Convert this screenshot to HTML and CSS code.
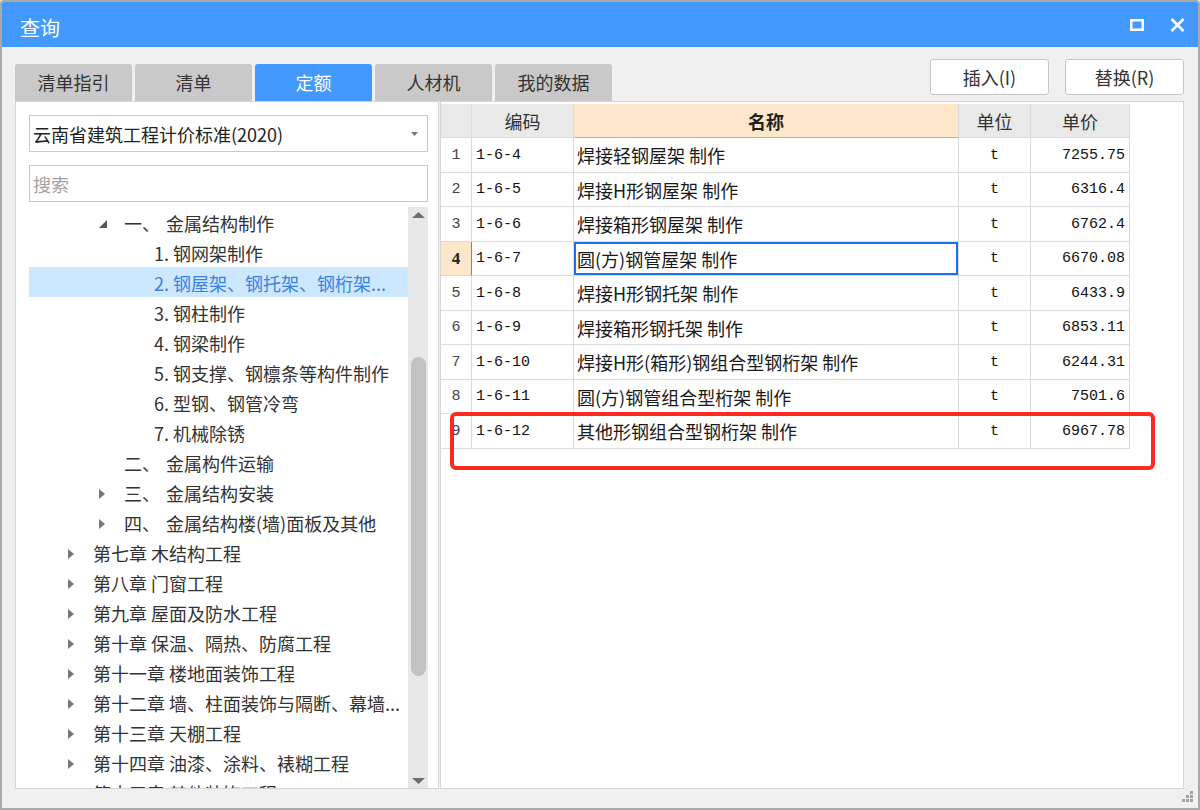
FILE: index.html
```html
<!DOCTYPE html>
<html lang="zh-CN">
<head>
<meta charset="utf-8">
<title>查询</title>
<link rel="stylesheet" href="styles.css">
</head>
<body>
<div class="window">
  <div class="titlebar">
    <span class="title">查询</span>
    <div class="win-ctrls">
      <svg class="ico" width="14" height="12" viewBox="0 0 14 12"><rect x="1.25" y="1.25" width="11.5" height="9.5" fill="none" stroke="#fff" stroke-width="2.5"/></svg>
      <svg class="ico" width="15" height="14" viewBox="0 0 15 14"><path d="M1.5 1 L13.5 13 M13.5 1 L1.5 13" stroke="#fff" stroke-width="2.6" fill="none"/></svg>
    </div>
  </div>
  <div class="body">
    <div class="toolbar">
      <div class="tabs">
        <div class="tab">清单指引</div>
        <div class="tab">清单</div>
        <div class="tab active">定额</div>
        <div class="tab">人材机</div>
        <div class="tab">我的数据</div>
      </div>
      <div class="actions">
        <button class="btn">插入(I)</button>
        <button class="btn">替换(R)</button>
      </div>
    </div>
    <div class="panes">
      <div class="left-pane">
        <div class="combo">
          <span>云南省建筑工程计价标准(2020)</span>
          <svg width="7" height="4" viewBox="0 0 7 4"><path d="M0 0 H7 L3.5 4 Z" fill="#777"/></svg>
        </div>
        <div class="search">搜索</div>
        <div class="tree-wrap">
          <div class="tree">
            <div class="node l2"><span class="exp"><svg width="8" height="8" viewBox="0 0 8 8"><path d="M8 0 V8 H0 Z" fill="#555"/></svg></span><span class="gap">一、</span>金属结构制作</div>
            <div class="node l3"><span class="exp"></span>1. 钢网架制作</div>
            <div class="node l3 sel"><span class="exp"></span>2. 钢屋架、钢托架、钢桁架...</div>
            <div class="node l3"><span class="exp"></span>3. 钢柱制作</div>
            <div class="node l3"><span class="exp"></span>4. 钢梁制作</div>
            <div class="node l3"><span class="exp"></span>5. 钢支撑、钢檩条等构件制作</div>
            <div class="node l3"><span class="exp"></span>6. 型钢、钢管冷弯</div>
            <div class="node l3"><span class="exp"></span>7. 机械除锈</div>
            <div class="node l2"><span class="exp"></span><span class="gap">二、</span>金属构件运输</div>
            <div class="node l2"><span class="exp"><svg width="6" height="10" viewBox="0 0 6 10"><path d="M0 0 L6 5 L0 10 Z" fill="#777"/></svg></span><span class="gap">三、</span>金属结构安装</div>
            <div class="node l2"><span class="exp"><svg width="6" height="10" viewBox="0 0 6 10"><path d="M0 0 L6 5 L0 10 Z" fill="#777"/></svg></span><span class="gap">四、</span>金属结构楼(墙)面板及其他</div>
            <div class="node l1"><span class="exp"><svg width="6" height="10" viewBox="0 0 6 10"><path d="M0 0 L6 5 L0 10 Z" fill="#777"/></svg></span>第七章 木结构工程</div>
            <div class="node l1"><span class="exp"><svg width="6" height="10" viewBox="0 0 6 10"><path d="M0 0 L6 5 L0 10 Z" fill="#777"/></svg></span>第八章 门窗工程</div>
            <div class="node l1"><span class="exp"><svg width="6" height="10" viewBox="0 0 6 10"><path d="M0 0 L6 5 L0 10 Z" fill="#777"/></svg></span>第九章 屋面及防水工程</div>
            <div class="node l1"><span class="exp"><svg width="6" height="10" viewBox="0 0 6 10"><path d="M0 0 L6 5 L0 10 Z" fill="#777"/></svg></span>第十章 保温、隔热、防腐工程</div>
            <div class="node l1"><span class="exp"><svg width="6" height="10" viewBox="0 0 6 10"><path d="M0 0 L6 5 L0 10 Z" fill="#777"/></svg></span>第十一章 楼地面装饰工程</div>
            <div class="node l1"><span class="exp"><svg width="6" height="10" viewBox="0 0 6 10"><path d="M0 0 L6 5 L0 10 Z" fill="#777"/></svg></span>第十二章 墙、柱面装饰与隔断、幕墙...</div>
            <div class="node l1"><span class="exp"><svg width="6" height="10" viewBox="0 0 6 10"><path d="M0 0 L6 5 L0 10 Z" fill="#777"/></svg></span>第十三章 天棚工程</div>
            <div class="node l1"><span class="exp"><svg width="6" height="10" viewBox="0 0 6 10"><path d="M0 0 L6 5 L0 10 Z" fill="#777"/></svg></span>第十四章 油漆、涂料、裱糊工程</div>
            <div class="node l1"><span class="exp"><svg width="6" height="10" viewBox="0 0 6 10"><path d="M0 0 L6 5 L0 10 Z" fill="#777"/></svg></span>第十五章 其他装饰工程</div>
          </div>
          <div class="vscroll">
            <svg class="arr-up" width="13" height="6" viewBox="0 0 13 6"><path d="M0 6 L6.5 0 L13 6 Z" fill="#6e6e6e"/></svg>
            <div class="thumb"></div>
            <div class="spacer"></div>
            <svg class="arr-down" width="13" height="6" viewBox="0 0 13 6"><path d="M0 0 L13 0 L6.5 6 Z" fill="#6e6e6e"/></svg>
          </div>
        </div>
      </div>
      <div class="right-pane">
        <div class="grid">
          <div class="c h"></div><div class="c h">编码</div><div class="c h hname">名称</div><div class="c h">单位</div><div class="c h">单价</div>

          <div class="c rn">1</div><div class="c code">1-6-4</div><div class="c name">焊接轻钢屋架 制作</div><div class="c unit">t</div><div class="c price">7255.75</div>
          <div class="c rn">2</div><div class="c code">1-6-5</div><div class="c name">焊接H形钢屋架 制作</div><div class="c unit">t</div><div class="c price">6316.4</div>
          <div class="c rn">3</div><div class="c code">1-6-6</div><div class="c name">焊接箱形钢屋架 制作</div><div class="c unit">t</div><div class="c price">6762.4</div>
          <div class="c rn cur">4</div><div class="c code">1-6-7</div><div class="c name focus">圆(方)钢管屋架 制作</div><div class="c unit">t</div><div class="c price">6670.08</div>
          <div class="c rn">5</div><div class="c code">1-6-8</div><div class="c name">焊接H形钢托架 制作</div><div class="c unit">t</div><div class="c price">6433.9</div>
          <div class="c rn">6</div><div class="c code">1-6-9</div><div class="c name">焊接箱形钢托架 制作</div><div class="c unit">t</div><div class="c price">6853.11</div>
          <div class="c rn">7</div><div class="c code">1-6-10</div><div class="c name">焊接H形(箱形)钢组合型钢桁架 制作</div><div class="c unit">t</div><div class="c price">6244.31</div>
          <div class="c rn">8</div><div class="c code">1-6-11</div><div class="c name">圆(方)钢管组合型桁架 制作</div><div class="c unit">t</div><div class="c price">7501.6</div>
          <div class="c rn">9</div><div class="c code">1-6-12</div><div class="c name">其他形钢组合型钢桁架 制作</div><div class="c unit">t</div><div class="c price">6967.78</div>
        </div>
        <div class="mark"></div>
      </div>
    </div>
    <svg class="grip" width="12" height="12" viewBox="0 0 12 12">
      <rect x="8" y="0" width="3" height="3" fill="#a3a3a3"/>
      <rect x="4" y="4" width="3" height="3" fill="#a3a3a3"/>
      <rect x="8" y="4" width="3" height="3" fill="#a3a3a3"/>
      <rect x="0" y="8" width="3" height="3" fill="#a3a3a3"/>
      <rect x="4" y="8" width="3" height="3" fill="#a3a3a3"/>
      <rect x="8" y="8" width="3" height="3" fill="#a3a3a3"/>
    </svg>
  </div>
</div>
</body>
</html>
```

FILE: styles.css
```css
* { box-sizing: border-box; }
html, body { margin: 0; padding: 0; }
body {
  width: 1200px;
  height: 810px;
  overflow: hidden;
  font-family: "Noto Sans CJK SC", "Noto Sans", sans-serif;
  color: #333;
  background: #f0f0f0;
}
.window {
  width: 1200px;
  height: 810px;
  border: 2px solid #a9a9a9;
  border-radius: 4px 4px 0 0;
  display: flex;
  flex-direction: column;
  background: #f0f0f0;
  overflow: hidden;
}
.titlebar {
  height: 45px;
  flex: none;
  background: #4499ff;
  display: flex;
  align-items: center;
  padding: 0 13px 0 18px;
  color: #fff;
}
.title {
  flex: 1;
  font-size: 20px;
  line-height: 24px;
  padding-top: 6px;
}
.win-ctrls {
  display: flex;
  align-items: center;
  gap: 26px;
}
.ico { display: block; }

.body {
  flex: 1;
  position: relative;
  padding: 12px 14px 19px 13px;
  display: flex;
  flex-direction: column;
}
.toolbar {
  height: 42px;
  flex: none;
  display: flex;
  justify-content: space-between;
}
.tabs {
  display: flex;
  gap: 3px;
  align-self: flex-end;
}
.tab {
  width: 117px;
  height: 37px;
  background: #c9c9c9;
  border-radius: 3px 3px 0 0;
  font-size: 18px;
  line-height: 37px;
  text-align: center;
  color: #333;
}
.tab.active {
  background: #4499ff;
  color: #fff;
}
.actions {
  display: flex;
  gap: 16px;
  align-self: flex-start;
}
.btn {
  width: 119px;
  height: 36px;
  padding: 0;
  border: 1px solid #c6c6c6;
  border-radius: 3px;
  background: #fff;
  font-family: "Noto Sans CJK SC", "Noto Sans", sans-serif;
  font-size: 18px;
  line-height: 34px;
  color: #333;
}

.panes {
  height: 688px;
  flex: none;
  display: flex;
  gap: 1px;
}
.left-pane {
  width: 424px;
  flex: none;
  background: #fff;
  border: 1px solid #d6d6d6;
  padding: 13px 10px 0 13px;
  display: flex;
  flex-direction: column;
}
.combo {
  height: 37px;
  flex: none;
  border: 1px solid #c9c9c9;
  display: flex;
  align-items: center;
  justify-content: space-between;
  padding: 1px 9px 0 3px;
  font-size: 18px;
  color: #222;
}
.search {
  height: 37px;
  flex: none;
  margin-top: 13px;
  border: 1px solid #c9c9c9;
  padding-left: 3px;
  font-size: 18px;
  line-height: 36px;
  color: #a2a2a2;
}
.tree-wrap {
  flex: 1;
  min-height: 0;
  margin-top: 5px;
  display: flex;
  overflow: hidden;
}
.tree {
  flex: 1;
  min-width: 0;
}
.node {
  height: 30px;
  display: flex;
  align-items: center;
  padding-top: 3px;
  font-size: 18px;
  line-height: 27px;
  white-space: nowrap;
  overflow: hidden;
  color: #333;
}
.node.l1 { padding-left: 39px; }
.node.l2 { padding-left: 70px; }
.node.l3 { padding-left: 100px; }
.node.sel {
  background: #cce8ff;
  color: #3d80e4;
}
.exp {
  width: 25px;
  flex: none;
  display: flex;
  align-items: center;
}
.exp svg { display: block; }
.gap { margin-right: 6px; }

.vscroll {
  width: 20px;
  flex: none;
  background: #e8e8e8;
  display: flex;
  flex-direction: column;
  align-items: center;
}
.arr-up { margin-top: 5px; flex: none; }
.thumb {
  flex: none;
  margin-top: 139px;
  width: 15px;
  height: 319px;
  border-radius: 8px;
  background: #c2c2c2;
}
.spacer { flex: 1; }
.arr-down { margin-bottom: 4px; flex: none; }

.right-pane {
  flex: 1;
  position: relative;
  background: #fff;
  border: 1px solid #d6d6d6;
  padding-top: 2px;
}
.grid {
  display: grid;
  grid-template-columns: 31px 102px 385px 72px 99px;
  grid-template-rows: 34px repeat(4, 35px 34px) 35px;
  width: max-content;
}
.c {
  border-right: 1px solid #dbdbdb;
  border-bottom: 1px solid #dbdbdb;
  display: flex;
  align-items: center;
  white-space: nowrap;
  overflow: hidden;
  color: #1a1a1a;
}
.h {
  background: #e9e9e9;
  justify-content: center;
  font-size: 18px;
  color: #333;
}
.h.hname {
  background: #fde6c9;
  font-weight: bold;
  color: #222;
  border-bottom-color: #8fbdf3;
}
.rn {
  justify-content: center;
  font-family: "Liberation Mono", monospace;
  font-size: 15px;
  color: #444;
}
.rn.cur {
  background: #fde6c9;
  font-family: "Liberation Serif", serif;
  font-size: 17px;
  font-weight: bold;
  color: #222;
  border-right: 1px solid #4a92ea;
}
.code {
  padding-left: 4px;
  font-family: "Liberation Mono", monospace;
  font-size: 15px;
  color: #111;
}
.name {
  padding-left: 3px;
  font-size: 18px;
}
.name.focus {
  box-shadow: inset 0 0 0 2px #1a6ff2;
}
.unit {
  justify-content: center;
  font-family: "Liberation Mono", monospace;
  font-size: 15px;
  color: #111;
}
.price {
  justify-content: flex-end;
  padding-right: 4px;
  font-family: "Liberation Mono", monospace;
  font-size: 15px;
  color: #111;
}
.mark {
  position: absolute;
  left: 9px;
  top: 310px;
  width: 705px;
  height: 58px;
  border: 4px solid #fe2a22;
  border-radius: 6px;
}
.grip {
  position: absolute;
  right: 4px;
  bottom: 5px;
}
```
